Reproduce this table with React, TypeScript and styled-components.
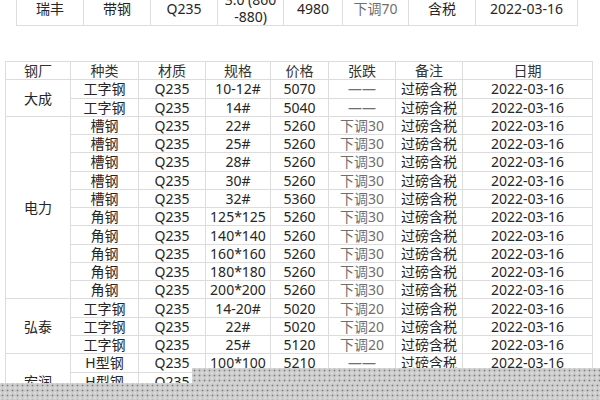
import React from "react";
import styled, { createGlobalStyle } from "styled-components";

type Row = { kind: string; spec: string; price: string; change: string };
type Group = { mill: string; rows: Row[] };

const groups: Group[] = [
  {
    mill: "大成",
    rows: [
      { kind: "工字钢", spec: "10-12#", price: "5070", change: "——" },
      { kind: "工字钢", spec: "14#", price: "5040", change: "——" },
    ],
  },
  {
    mill: "电力",
    rows: [
      { kind: "槽钢", spec: "22#", price: "5260", change: "下调30" },
      { kind: "槽钢", spec: "25#", price: "5260", change: "下调30" },
      { kind: "槽钢", spec: "28#", price: "5260", change: "下调30" },
      { kind: "槽钢", spec: "30#", price: "5260", change: "下调30" },
      { kind: "槽钢", spec: "32#", price: "5360", change: "下调30" },
      { kind: "角钢", spec: "125*125", price: "5260", change: "下调30" },
      { kind: "角钢", spec: "140*140", price: "5260", change: "下调30" },
      { kind: "角钢", spec: "160*160", price: "5260", change: "下调30" },
      { kind: "角钢", spec: "180*180", price: "5260", change: "下调30" },
      { kind: "角钢", spec: "200*200", price: "5260", change: "下调30" },
    ],
  },
  {
    mill: "弘泰",
    rows: [
      { kind: "工字钢", spec: "14-20#", price: "5020", change: "下调20" },
      { kind: "工字钢", spec: "22#", price: "5020", change: "下调20" },
      { kind: "工字钢", spec: "25#", price: "5120", change: "下调20" },
    ],
  },
  {
    mill: "宏润",
    rows: [
      { kind: "H型钢", spec: "100*100", price: "5210", change: "——" },
      { kind: "H型钢", spec: "125*125", price: "5210", change: "——" },
      { kind: "H型钢", spec: "150*150", price: "5210", change: "——" },
    ],
  },
];

const topCols = [67, 67, 67, 66, 59, 66, 67, 102];
const mainCols = [65, 68, 67, 65, 58, 67, 67, 130];

export default function App() {
  return (
    <>
      <GlobalStyle />
      <Page>
        <TopTable>
          <colgroup>
            {topCols.map((w, i) => (
              <col key={i} style={{ width: w }} />
            ))}
          </colgroup>
          <tbody>
            <TopRow>
              <Cell>瑞丰</Cell>
              <Cell>带钢</Cell>
              <Cell>Q235</Cell>
              <TwoLine>
                3.0 (860
                <br />
                -880)
              </TwoLine>
              <Cell>4980</Cell>
              <Cell $muted>下调70</Cell>
              <Cell>含税</Cell>
              <Cell>2022-03-16</Cell>
            </TopRow>
          </tbody>
        </TopTable>

        <MainTable>
          <colgroup>
            {mainCols.map((w, i) => (
              <col key={i} style={{ width: w }} />
            ))}
          </colgroup>
          <thead>
            <BodyRow>
              {["钢厂", "种类", "材质", "规格", "价格", "张跌", "备注", "日期"].map((h) => (
                <Head key={h}>{h}</Head>
              ))}
            </BodyRow>
          </thead>
          <tbody>
            {groups.map((g) =>
              g.rows.map((r, i) => (
                <BodyRow key={g.mill + i}>
                  {i === 0 && <Cell rowSpan={g.rows.length}>{g.mill}</Cell>}
                  <Cell>{r.kind}</Cell>
                  <Cell>Q235</Cell>
                  <Cell>{r.spec}</Cell>
                  <Cell>{r.price}</Cell>
                  <Cell $muted>{r.change}</Cell>
                  <Cell>过磅含税</Cell>
                  <Cell>2022-03-16</Cell>
                </BodyRow>
              ))
            )}
          </tbody>
        </MainTable>

        <MaskStep />
        <MaskBottom />
      </Page>
    </>
  );
}

const GlobalStyle = createGlobalStyle`
  html, body {
    margin: 0;
    padding: 0;
    background: #ffffff;
  }
  body {
    font-family: "Noto Sans", "Noto Sans CJK SC", sans-serif;
  }
`;

const Page = styled.div`
  position: relative;
  width: 600px;
  height: 400px;
  overflow: hidden;
  background: #ffffff;
`;

const TopTable = styled.table`
  table-layout: fixed;
  border-collapse: collapse;
  width: 561px;
  margin: -10px 0 0 16px;
`;

const TopRow = styled.tr`
  height: 32px;
`;

const MainTable = styled.table`
  table-layout: fixed;
  border-collapse: collapse;
  width: 587px;
  margin: 35px 0 0 5px;
`;

const BodyRow = styled.tr`
  height: 18.27px;
`;

const Cell = styled.td<{ $muted?: boolean }>`
  border: 1px solid #dcdcdc;
  padding: 0;
  text-align: center;
  vertical-align: middle;
  font-size: 14px;
  line-height: 17px;
  white-space: nowrap;
  color: ${(p) => (p.$muted ? "#6f6f6f" : "#262626")};
`;

const TwoLine = styled(Cell)`
  line-height: 17px;
  white-space: normal;
`;

const Head = styled.th`
  border: 1px solid #dcdcdc;
  padding: 0;
  text-align: center;
  vertical-align: middle;
  font-weight: 400;
  font-size: 14px;
  line-height: 17px;
  color: #333333;
`;

const dotted = `
  background-color: #cbcbcb;
  background-image:
    radial-gradient(circle, #7a7a7a 0.7px, transparent 1.1px),
    radial-gradient(circle, #f4f4f4 0.7px, transparent 1.1px);
  background-size: 5px 5px, 5px 5px;
  background-position: 0 0, 2.5px 2.5px;
`;

const MaskStep = styled.div`
  position: absolute;
  left: 192px;
  right: 0;
  top: 368px;
  bottom: 0;
  ${dotted}
`;

const MaskBottom = styled.div`
  position: absolute;
  left: 0;
  right: 0;
  top: 383px;
  bottom: 0;
  ${dotted}
`;
